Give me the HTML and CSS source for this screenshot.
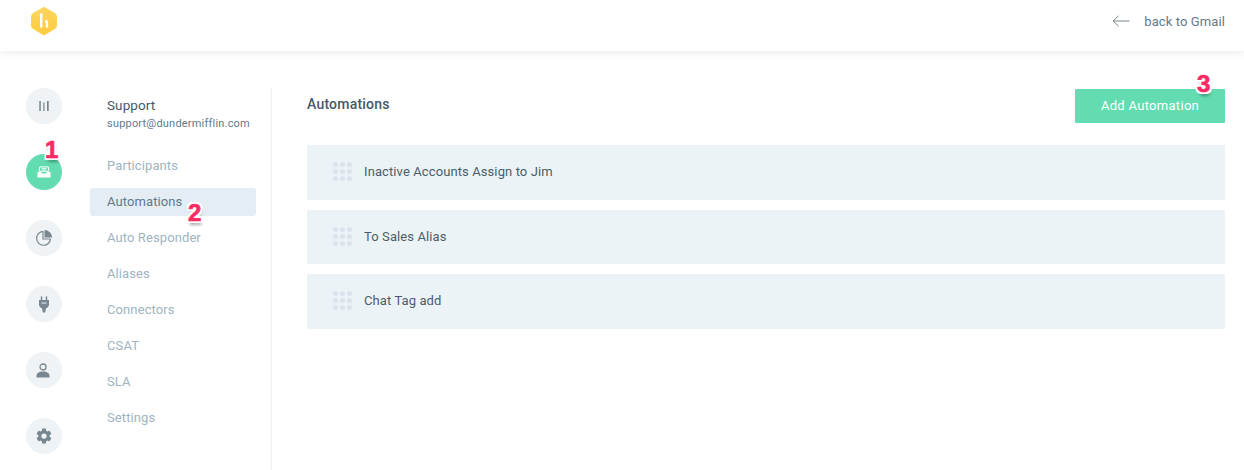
FILE: index.html
```html
<!DOCTYPE html>
<html lang="en">
<head>
<meta charset="utf-8">
<title>Automations</title>
<link rel="stylesheet" href="styles.css">
</head>
<body>
<header class="topbar">
  <svg class="logo" width="28" height="30" viewBox="0 0 28 30">
    <defs><linearGradient id="lg" x1="0" y1="0" x2="0" y2="1"><stop offset="0" stop-color="#fbd65f"/><stop offset="1" stop-color="#fdcb3f"/></linearGradient></defs>
    <path d="M14 .8 L24.8 7 Q27 8.300 27 10.800 V19.500 Q27 21.800 24.800 23 L14 29.500 L3.200 23 Q1 21.800 1 19.500 V10.800 Q1 8.300 3.200 7 Z" fill="url(#lg)"/>
    <path d="M9.800 8 L12.400 6.800 V21.500 H10.200 Z M15 14 Q18.200 13.400 18.200 16.400 V21.500 H15.800 V17.200 Q15.800 16.500 15 16.600 Z" fill="#fff"/>
  </svg>
  <a class="back">
    <svg width="18" height="12" viewBox="0 0 18 12"><path d="M17.500 6H1M6.500 .8 1 6l5.500 5.200" fill="none" stroke="#7b868f" stroke-width="1"/></svg>
    <span>back to Gmail</span>
  </a>
</header>
<div class="layout">
  <nav class="rail">
    <div class="circle"><svg width="10" height="10" viewBox="0 0 10 10"><path d="M.3 0h1.500v10H.3zM4.300 1.500h1.200V10H4.300zM8 0h1.700v10H8z" fill="#78868f"/></svg></div>
    <div class="circle active"><svg width="14" height="12" viewBox="0 0 14 12"><path d="M2.700 .9h8.600l.5 4.300H2.200z" fill="none" stroke="#fff" stroke-width="1"/><path d="M.5 6h3.600l.8 1.400h4.200l.8-1.400h3.600v5.500H.5z" fill="#fff"/><path d="M4.500 2.500h5M5 4h4" stroke="#fff" stroke-width=".8"/></svg></div>
    <div class="circle"><svg width="18" height="18" viewBox="0 0 18 18"><path d="M8 2.300a7 7 0 1 0 7.600 7.700" fill="none" stroke="#78868f" stroke-width="1.200"/><path d="M8 2.300v7.700h7.600" fill="none" stroke="#78868f" stroke-width="1.200"/><path d="M9.500 1a7.500 7.500 0 0 1 7.500 7.500H9.500z" fill="#78868f"/></svg></div>
    <div class="circle"><svg width="12" height="17" viewBox="0 0 12 17"><path d="M2.800 .5h1.500v3.600h3.400V.5h1.500v3.600H11v4.400c0 1.800-1.200 3.200-3 3.700L7.200 16.500H4.800L4 12.200C2.200 11.700 1 10.300 1 8.500V4.100h1.800z" fill="#78868f"/><path d="M3.500 7h5" stroke="#eff3f6" stroke-width="1"/></svg></div>
    <div class="circle"><svg class="person" width="14" height="15" viewBox="0 0 14 15"><circle cx="7" cy="4" r="3" fill="none" stroke="#78868f" stroke-width="1.300"/><path d="M.5 14.500v-1.500c0-2.800 2.600-4.500 6.500-4.500s6.500 1.700 6.500 4.500v1.500z" fill="#78868f"/></svg></div>
    <div class="circle"><svg width="18" height="18" viewBox="0 0 24 24"><path d="M19.400 13c.04-.33.100-.66.100-1s-.06-.67-.1-1l2.100-1.650a.5.500 0 0 0 .12-.64l-2-3.460a.5.500 0 0 0-.6-.22l-2.500 1a7.300 7.300 0 0 0-1.700-1l-.38-2.650A.5.500 0 0 0 14 2h-4a.5.500 0 0 0-.5.420l-.37 2.650a7.700 7.700 0 0 0-1.700 1l-2.500-1a.5.500 0 0 0-.6.220l-2 3.460a.5.500 0 0 0 .12.640L4.550 11c-.04.330-.05.660-.05 1s.01.670.05 1l-2.100 1.650a.5.500 0 0 0-.12.640l2 3.460c.12.220.38.300.6.220l2.500-1c.52.400 1.080.730 1.700 1l.37 2.650c.05.240.25.420.5.420h4c.25 0 .45-.18.500-.42l.37-2.650a7.300 7.300 0 0 0 1.700-1l2.500 1c.22.080.48 0 .6-.22l2-3.460a.5.500 0 0 0-.12-.64zM12 15.500a3.500 3.500 0 1 1 0-7 3.500 3.500 0 0 1 0 7z" fill="#78868f"/></svg></div>
  </nav>
  <aside class="side">
    <div class="account">
      <div class="account-name">Support</div>
      <div class="account-mail">support@dundermifflin.com</div>
    </div>
    <ul class="menu">
      <li class="menu-item">Participants</li>
      <li class="menu-item current">Automations</li>
      <li class="menu-item">Auto Responder</li>
      <li class="menu-item">Aliases</li>
      <li class="menu-item">Connectors</li>
      <li class="menu-item">CSAT</li>
      <li class="menu-item">SLA</li>
      <li class="menu-item">Settings</li>
    </ul>
  </aside>
  <main class="content">
    <div class="head">
      <h1>Automations</h1>
      <button class="add">Add Automation</button>
    </div>
    <div class="rows">
      <div class="row tall"><span class="grip"><i></i><i></i><i></i><i></i><i></i><i></i><i></i><i></i><i></i></span>Inactive Accounts Assign to Jim</div>
      <div class="row"><span class="grip"><i></i><i></i><i></i><i></i><i></i><i></i><i></i><i></i><i></i></span>To Sales Alias</div>
      <div class="row tall"><span class="grip"><i></i><i></i><i></i><i></i><i></i><i></i><i></i><i></i><i></i></span>Chat Tag add</div>
    </div>
  </main>
</div>
<span class="mark m1">1</span>
<span class="mark m2">2</span>
<span class="mark m3">3</span>
</body>
</html>
```
FILE: styles.css
```css
* { box-sizing: border-box; }
html, body { margin: 0; height: 470px; overflow: hidden; background: #fff; }
body { position: relative; font-family: Roboto, "Liberation Sans", sans-serif; font-size: 13px; letter-spacing: .1px; color: #4a5d6b; }

.topbar { height: 51px; display: flex; align-items: center; justify-content: space-between; padding: 0 19px 9px 30px; background: #fff; box-shadow: 0 1px 8px rgba(60, 70, 80, .12); }
.logo { display: block; }
.back { display: flex; align-items: center; gap: 14px; color: #5f7a8c; }
.back svg { display: block; }

.layout { display: flex; height: 419px; padding-top: 37px; }

.rail { width: 90px; flex: none; padding-left: 26px; display: flex; flex-direction: column; gap: 30px; }
.circle { width: 36px; height: 36px; flex: none; border-radius: 50%; background: #eff3f6; display: flex; align-items: center; justify-content: center; }
.circle.active { background: #62dcb0; }
.circle svg { display: block; }
.circle .person { margin-right: 2px; }

.side { width: 182px; flex: none; border-right: 1px solid #eef1f3; padding-right: 15px; }
.account { padding: 9px 0 0 17px; height: 64px; }
.account-name { font-size: 13.500px; line-height: 16px; color: #46596a; }
.account-mail { font-size: 11px; line-height: 16px; margin-top: 3px; letter-spacing: .2px; color: #5f7a8c; }
.menu { list-style: none; margin: 0; padding: 0; display: flex; flex-direction: column; gap: 8px; }
.menu-item { height: 28px; line-height: 28px; padding-left: 17px; border-radius: 3px; color: #a0b4c0; }
.menu-item.current { background: #e3edf3; color: #5f7a8c; }

.content { flex: 1; padding: 1px 19px 0 35px; }
.head { display: flex; justify-content: space-between; align-items: flex-start; height: 56px; }
.head h1 { margin: 0; font-size: 14px; line-height: 30px; font-weight: 500; letter-spacing: .2px; color: #46596a; }
.add { width: 150px; height: 34px; border: 0; padding: 0 0 2px; background: #62dcb0; color: #fff; font: inherit; letter-spacing: .3px; border-radius: 1px; }

.rows { display: flex; flex-direction: column; gap: 10px; }
.row { height: 54px; display: flex; align-items: center; gap: 12px; padding: 0 0 2px 26px; background: #ecf3f7; color: #4a5d6b; }
.row.tall { height: 55px; }
.grip { display: grid; grid-template-columns: repeat(3, 5px); grid-auto-rows: 5px; gap: 2px; }
.grip i { display: block; border-radius: 50%; background: #dce3ec; }

.mark { position: absolute; font-family: "Liberation Sans", Arial, sans-serif; font-size: 24px; font-weight: 700; line-height: 24px; letter-spacing: 0; color: #f92b63; -webkit-text-stroke: .7px #f92b63; text-shadow: 2px 0 0 #fff, -2px 0 0 #fff, 0 2px 0 #fff, 0 -2px 0 #fff, 2px 2px 0 #fff, -2px 2px 0 #fff, 2px -2px 0 #fff, -2px -2px 0 #fff, 1px 4px 3px rgba(0, 0, 0, .35); }
.m1 { left: 45px; top: 138px; }
.m2 { left: 188px; top: 201px; }
.m3 { left: 1197px; top: 72px; }
```
